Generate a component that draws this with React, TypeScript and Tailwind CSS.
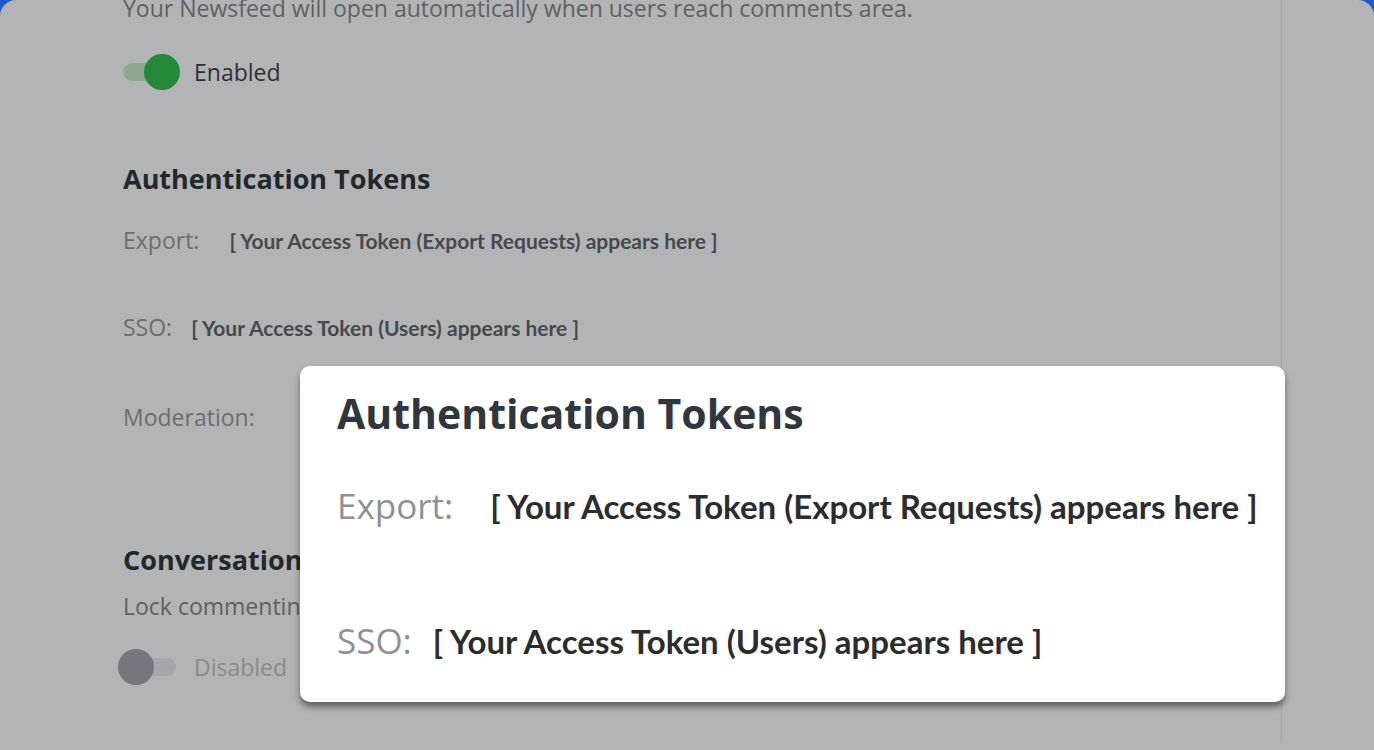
import { ReactNode } from 'react'

const body = "font-['Open_Sans',sans-serif]"
const token = "font-['Lato',sans-serif] font-bold"

function Toggle({ on }: { on: boolean }) {
  return (
    <div className="relative w-[58px] h-[36px] flex items-center">
      <div className={`h-[18px] rounded-full ${on ? 'w-[50px] bg-[#8fa88f]' : 'ml-[5px] w-[54px] bg-[#a5a7aa]'}`} />
      <div
        className={`absolute top-0 h-[36px] w-[36px] rounded-full ${
          on ? 'left-[21px] bg-[#24893a]' : 'left-[0px] bg-[#74777c]'
        }`}
      />
    </div>
  )
}

function TokenRow({ label, value, gap, className = '' }: { label: string; value: string; gap: string; className?: string }) {
  return (
    <div className={`flex items-baseline ${gap} ${className}`}>
      <span className={`${body} text-[23px] leading-[30px] text-[#6b6e72]`}>{label}</span>
      <span className={`${token} text-[21px] leading-[30px] text-[#46494d]`}>{value}</span>
    </div>
  )
}

function Section({ children }: { children: ReactNode }) {
  return <div className="flex flex-col">{children}</div>
}

export default function App() {
  return (
    <div className="h-[750px] w-[1374px] bg-[#1a5cc9] overflow-hidden">
      <div className="relative h-full w-full rounded-t-[16px] bg-[#b3b4b6] flex overflow-hidden">
        {/* main settings column */}
        <div className="w-[1282px] h-full border-r border-[#a5a6a9] pl-[123px] -mt-[7px]">
          <Section>
            <p className={`${body} text-[23px] leading-[30px] text-[#5e6166] whitespace-nowrap`}>
              Your Newsfeed will open automatically when users reach comments area.
            </p>
            <div className="mt-[31px] flex items-center gap-[13px]">
              <Toggle on />
              <span className={`${body} text-[23px] text-[#2c3034]`}>Enabled</span>
            </div>
          </Section>

          <Section>
            <h3 className={`${body} mt-[72px] text-[27px] leading-[34px] font-bold text-[#23282c]`}>
              Authentication Tokens
            </h3>
            <TokenRow className="mt-[29px]" gap="gap-[30px]" label="Export:" value="[ Your Access Token (Export Requests) appears here ]" />
            <TokenRow className="mt-[56px]" gap="gap-[19px]" label="SSO:" value="[ Your Access Token (Users) appears here ]" />
            <div className="mt-[59px] flex items-baseline">
              <span className={`${body} text-[23px] leading-[30px] text-[#6b6e72]`}>Moderation:</span>
            </div>
          </Section>

          <Section>
            <h3 className={`${body} mt-[111px] text-[27px] leading-[34px] font-bold text-[#23282c]`}>
              Conversation Locking
            </h3>
            <p className={`${body} mt-[14px] text-[23px] leading-[30px] text-[#5e6166]`}>
              Lock commenting on all conversations.
            </p>
            <div className="mt-[28px] -ml-[5px] flex items-center gap-[18px]">
              <Toggle on={false} />
              <span className={`${body} text-[23px] text-[#888b8f]`}>Disabled</span>
            </div>
          </Section>
        </div>
        <div className="flex-1" />

        {/* magnified callout */}
        <div className="absolute left-[300px] top-[366px] w-[985px] h-[336px] rounded-[10px] bg-white shadow-[0_5px_6px_rgba(0,0,0,0.45)] pl-[37px] pt-[25px]">
          <h2 className={`${body} text-[41px] leading-[44px] font-bold text-[#2f363d]`}>Authentication Tokens</h2>
          <div className="mt-[50px] flex items-baseline gap-[37px]">
            <span className={`${body} text-[35px] leading-[42px] text-[#8d9195]`}>Export:</span>
            <span className={`${token} text-[33px] leading-[42px] text-[#2b2c2e]`}>
              [ Your Access Token (Export Requests) appears here ]
            </span>
          </div>
          <div className="mt-[93px] flex items-baseline gap-[21px]">
            <span className={`${body} text-[35px] leading-[42px] text-[#8d9195]`}>SSO:</span>
            <span className={`${token} text-[33px] leading-[42px] text-[#2b2c2e]`}>
              [ Your Access Token (Users) appears here ]
            </span>
          </div>
        </div>
      </div>
    </div>
  )
}
